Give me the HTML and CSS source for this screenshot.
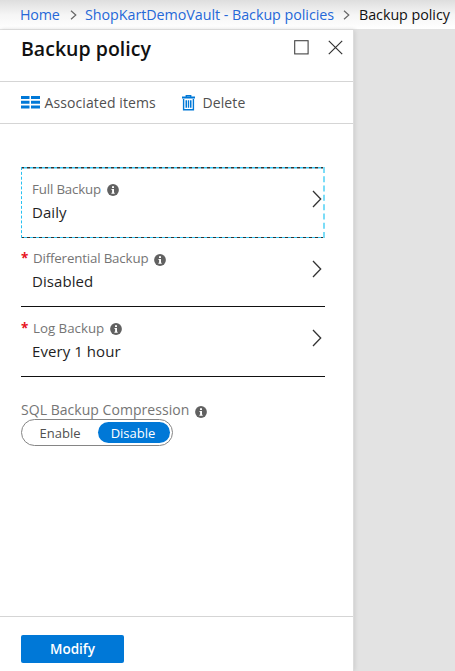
FILE: index.html
```html
<!DOCTYPE html>
<html lang="en">
<head>
<meta charset="utf-8">
<title>Backup policy</title>
<link rel="stylesheet" href="styles.css">
</head>
<body>
<svg class="defs" aria-hidden="true">
  <symbol id="info" viewBox="0 0 12 12"><circle cx="6" cy="6" r="5.9" fill="#616161"/><path d="M5 2.2h2v1.7H5zM4.5 5H7v3.8h.7v1H4.4v-1h.7V6h-.6z" fill="#fff"/></symbol>
  <symbol id="chevron" viewBox="0 0 10 18"><path d="M1 1l7.7 8L1 17" fill="none" stroke="#333" stroke-width="1.3"/></symbol>
  <symbol id="crumb" viewBox="0 0 7 10"><path d="M1 .7L5.8 5 1 9.3" fill="none" stroke="#666" stroke-width="1.2"/></symbol>
</svg>
<nav class="breadcrumb">
  <a class="crumb-home">Home</a>
  <svg class="sep"><use href="#crumb"/></svg>
  <a class="crumb-vault">ShopKartDemoVault - Backup policies</a>
  <svg class="sep"><use href="#crumb"/></svg>
  <span class="crumb-current">Backup policy</span>
</nav>
<main class="blade">
  <header class="title-bar">
    <h1>Backup policy</h1>
    <svg class="maximize" viewBox="0 0 15 15"><rect x=".7" y=".7" width="13.4" height="13.2" fill="none" stroke="#444" stroke-width="1.1"/></svg>
    <svg class="close" viewBox="0 0 15 15"><path d="M.8.8l13.4 13.4M14.2.8L.8 14.2" stroke="#333" stroke-width="1.2"/></svg>
  </header>
  <div class="toolbar">
    <svg class="items-icon" viewBox="0 0 19 13"><path d="M0 0h8.5v2.9H0zM10 0h9v2.9h-9zM0 4.8h8.5v3H0zM10 4.8h9v3h-9zM0 9.6h8.5v3H0zM10 9.6h9v3h-9z" fill="#0078d7"/></svg>
    <span class="tool-items">Associated items</span>
    <svg class="trash-icon" viewBox="0 0 13 16"><path d="M4.3 2V.7h4.4V2M1.6 4v10.8h9.8V4" fill="none" stroke="#0078d7" stroke-width="1.4"/><path d="M0 1.5h13v2H0zM3.5 5.3H5v7.5H3.5zM5.8 5.3h1.4v7.5H5.8zM8 5.3h1.5v7.5H8z" fill="#0078d7"/></svg>
    <span class="tool-delete">Delete</span>
  </div>
  <section class="content">
    <div class="row focused">
      <div class="row-text">
        <div class="label"><span class="l-row">Full Backup</span><svg class="info"><use href="#info"/></svg></div>
        <div class="value">Daily</div>
      </div>
      <svg class="chevron"><use href="#chevron"/></svg>
    </div>
    <div class="row">
      <div class="row-text">
        <div class="label"><b>*</b><span class="l-row">Differential Backup</span><svg class="info"><use href="#info"/></svg></div>
        <div class="value">Disabled</div>
      </div>
      <svg class="chevron"><use href="#chevron"/></svg>
    </div>
    <div class="row last">
      <div class="row-text">
        <div class="label"><b>*</b><span class="l-log">Log Backup</span><svg class="info"><use href="#info"/></svg></div>
        <div class="value">Every 1 hour</div>
      </div>
      <svg class="chevron"><use href="#chevron"/></svg>
    </div>
    <div class="label compression"><span>SQL Backup Compression</span><svg class="info"><use href="#info"/></svg></div>
    <div class="toggle"><span class="option">Enable</span><span class="option selected">Disable</span></div>
  </section>
  <footer><button>Modify</button></footer>
</main>
</body>
</html>
```
FILE: styles.css
```css
* { box-sizing: border-box; }
body {
  margin: 0;
  height: 671px;
  overflow: hidden;
  display: flex;
  flex-direction: column;
  background: #e3e3e3;
  font-family: "Segoe UI", "Open Sans", sans-serif;
  color: #1a1a1a;
  white-space: nowrap;
}
svg { display: block; flex: none; }
.defs { position: absolute; width: 0; height: 0; }
.breadcrumb {
  height: 30px;
  flex: none;
  display: flex;
  align-items: center;
  padding: 1px 0 0 20px;
  border-bottom: 1px solid #e2e2e2;
  background: linear-gradient(#dedede, #f5f5f5 50%, #fff);
  font-size: 14.3px;
  line-height: 20px;
}
.breadcrumb a { color: #2568d8; flex: none; }
.crumb-home { width: 50px; letter-spacing: -.2px; }
.sep { width: 7px; height: 10px; }
.crumb-vault { width: 251px; margin: 0 7px 0 8px; letter-spacing: -.04px; }
.crumb-current { margin-left: 9px; color: #111; letter-spacing: -.04px; }
.blade {
  width: 354px;
  flex: 1;
  display: flex;
  flex-direction: column;
  background: #fff;
  border-right: 1px solid #dcdcdc;
  box-shadow: 1px 0 4px #ccc;
}
.title-bar {
  height: 52px;
  display: flex;
  align-items: flex-start;
  padding: 5px 10px 0 21px;
  border-bottom: 1px solid #d5d5d5;
}
h1 { flex: 1; margin: 0; font-size: 19.5px; line-height: 27px; font-weight: 600; color: #111; letter-spacing: .02px; }
.maximize { width: 15px; height: 15px; margin: 5px 19px 0 0; }
.close { width: 15px; height: 15px; margin-top: 5px; }
.toolbar {
  height: 42px;
  display: flex;
  align-items: center;
  padding-left: 20.5px;
  border-bottom: 1px solid #d5d5d5;
  font-size: 14px;
  color: #505050;
}
.items-icon { width: 19px; height: 13px; }
.tool-items { width: 137px; margin-left: 5px; letter-spacing: .1px; }
.trash-icon { width: 13px; height: 16px; }
.tool-delete { margin-left: 8px; letter-spacing: .1px; }
.content { flex: 1; padding: 43px 28px 0 21px; }
.row {
  height: 69px;
  display: flex;
  align-items: center;
  justify-content: space-between;
  padding: 0 3px 4px 0;
  border-bottom: 1.5px solid #111;
}
.row.focused {
  height: 71px;
  border: 0;
  background:
    repeating-linear-gradient(90deg, #333 0 3px, #32c6f4 3px 6px) 0 0 / 100% 1.5px no-repeat,
    repeating-linear-gradient(90deg, #333 0 3px, #32c6f4 3px 6px) 0 100% / 100% 1px no-repeat;
  border-left: 1px dashed #28c0f0;
  border-right: 2px dashed #7bdcf7;
  background-origin: border-box;
  padding-right: 1px;
}
.row.last { height: 70px; }
.label { height: 20px; display: flex; align-items: center; font-size: 13.3px; line-height: 20px; color: #757575; }
.label b { width: 12px; color: #e81123; font-size: 13.5px; font-weight: 700; }
.l-row { letter-spacing: -.16px; }
.focused .label, .focused .value { padding-left: 10px; }
.value { padding-left: 11px; margin-top: 3px; font-size: 15px; line-height: 21px; color: #1f1f1f; letter-spacing: .07px; }
.info { width: 12px; height: 12px; margin: 3px 0 0 6px; }
.chevron { width: 10px; height: 18px; margin-bottom: 3px; }
.compression { margin-top: 23px; font-size: 14px; letter-spacing: .04px; }
.toggle {
  width: 152px;
  height: 27px;
  display: flex;
  padding: 2px;
  margin-top: -1px;
  border: 1px solid #858585;
  border-radius: 14px;
  font-size: 13px;
  line-height: 22px;
  color: #505050;
}
.option { width: 74px; padding-right: 2px; text-align: center; }
.option.selected { width: 72px; height: 21px; border-radius: 11px; background: #0078d7; color: #fff; }
footer { height: 55px; flex: none; padding: 18px 0 0 21px; border-top: 1px solid #d5d5d5; }
button {
  display: block;
  width: 103px;
  height: 28px;
  padding: 0;
  border: 0;
  border-radius: 2px;
  background: #0078d7;
  color: #fff;
  font: 600 13.5px/28px "Segoe UI", "Open Sans", sans-serif;
}
```
